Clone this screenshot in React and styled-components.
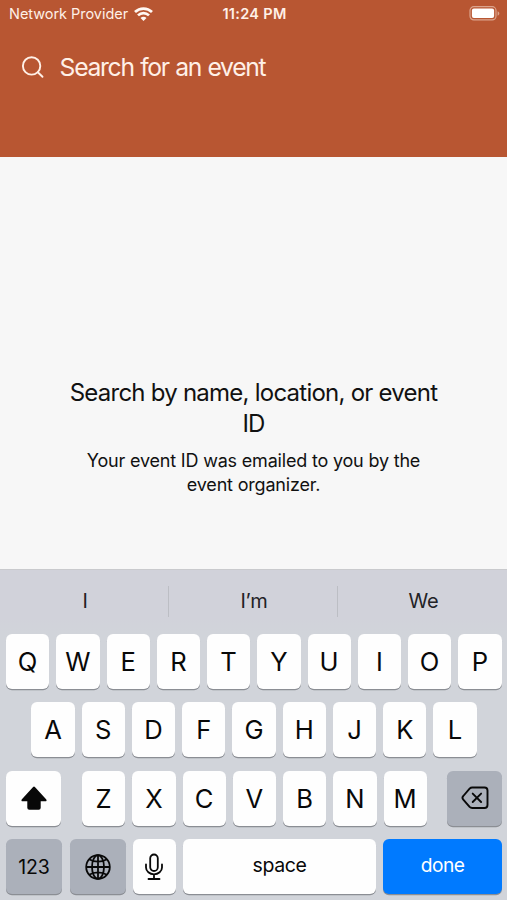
import React from 'react';
import styled, { createGlobalStyle } from 'styled-components';


const GlobalStyle = createGlobalStyle`
  * {
    box-sizing: border-box;
  }

  body {
    margin: 0;
    font-family: Inter, 'Liberation Sans', sans-serif;
    color: #111;
  }
`;

const Screen = styled.div`
  display: flex;
  flex-direction: column;
  width: 507px;
  height: 900px;
  overflow: hidden;
  background: #f7f7f7;
`;

const Header = styled.header`
  height: 157px;
  background: #b85632;
  color: #fff0e7;
`;

const StatusBar = styled.div`
  display: grid;
  grid-template-columns: 1fr auto 1fr;
  align-items: center;
  height: 27px;
  padding: 0 7px 0 9px;
`;

const Carrier = styled.div`
  display: flex;
  align-items: center;
  gap: 6px;
  font-size: 14.5px;
  letter-spacing: -0.04px;
  white-space: nowrap;
`;

const Clock = styled.div`
  font-size: 14.5px;
  font-weight: 600;
  letter-spacing: 0.3px;
`;

const Battery = styled.svg`
  justify-self: end;
`;

const SearchField = styled.div`
  display: flex;
  align-items: center;
  gap: 14.6px;
  height: 80px;
  padding: 0 0 0 21px;
  font-size: 24.7px;
  letter-spacing: -1.3px;
  word-spacing: 0.8px;
`;

const Message = styled.main`
  flex: 1;
  padding: 221px 60px 0;
  text-align: center;
`;

const Title = styled.h1`
  margin: 0;
  font-size: 24px;
  font-weight: 400;
  line-height: 30.5px;
  letter-spacing: -0.76px;
`;

const Hint = styled.p`
  margin: 9.5px 20px 0;
  font-size: 18px;
  line-height: 24.5px;
  letter-spacing: -0.19px;
`;

const Keyboard = styled.div`
  height: 331px;
  background: #d1d4da;
  border-top: 1px solid #c9cacd;
`;

const Suggestions = styled.div`
  display: grid;
  grid-template-columns: repeat(3, 1fr);
  align-items: center;
  height: 63.5px;
  background: linear-gradient(#d1d2da 75%, #d1d4da);
`;

const Suggestion = styled.div`
  height: 31px;
  padding-left: 2px;
  border-right: ${({ $last }) => ($last ? 'none' : '1px solid #bcbec4')};
  font-size: 20px;
  line-height: 31px;
  letter-spacing: -0.2px;
  text-align: center;
  color: #222226;
`;

const Keys = styled.div`
  display: flex;
  flex-direction: column;
  gap: 13.5px;
  padding: 0 5.5px 0 6px;
`;

const Row = styled.div`
  display: flex;
  gap: 7px;
  height: 55px;
  padding: 0 ${({ $inset }) => $inset || 0}px;
`;

const backgrounds = {
  light: '#fefefe',
  dark: '#abb0ba',
  primary: '#007aff',
};

const Key = styled.div`
  display: flex;
  flex: none;
  align-items: center;
  justify-content: center;
  width: ${({ $width }) => $width || 43.25}px;
  margin-left: ${({ $before }) => $before || 0}px;
  border-radius: 6px;
  background: ${({ $tone }) => backgrounds[$tone || 'light']};
  box-shadow: 0 1.3px 0 #8b8e94;
  color: ${({ $tone }) => ($tone === 'primary' ? '#fff' : '#080808')};
  font-size: ${({ $size }) => $size || 25.6}px;
  letter-spacing: ${({ $tracking }) => $tracking || 0}px;
  padding-bottom: ${({ $lift }) => $lift || 0}px;
`;

const SearchIcon = () => (
  <svg width="24" height="24" viewBox="0 0 24 24" fill="none" stroke="currentColor" strokeWidth="1.9" strokeLinecap="round">
    <circle cx="10.6" cy="10.9" r="8.7" />
    <path d="M16.8 17.2l4.7 4.6" />
  </svg>
);

const WifiIcon = () => (
  <svg width="19" height="14" viewBox="0 0 19 14" fill="none" stroke="#fff8f3" strokeWidth="2.7">
    <path d="M1 5a12.2 12.2 0 0 1 17 0" />
    <path d="M4 8.4a7.9 7.9 0 0 1 11 0" />
    <path d="M9.5 14L6.500 11a4.200 4.200 0 0 1 6 0z" fill="#fff8f3" stroke="none" />
  </svg>
);

const BatteryIcon = () => (
  <Battery width="31" height="15" viewBox="0 0 31 15" fill="none">
    <rect x="1" y="0.7" width="26" height="13.2" rx="3.8" stroke="#dba48d" strokeWidth="1.2" />
    <rect x="2.9" y="2.6" width="22.2" height="9.4" rx="2" fill="#fff" />
    <path d="M28.6 5.2c2.3.8 2.3 3.7 0 4.5z" fill="#dba48d" />
  </Battery>
);

const ShiftIcon = () => (
  <svg width="26" height="24" viewBox="0 0 26 24" fill="currentColor">
    <path d="M12.100 1q.9-.8 1.800 0l11.200 12.200c.9 1 .5 2.100-.8 2.100H19.700v6.400q0 2-2 2H8.300q-2 0-2-2v-6.400H1.700c-1.300 0-1.700-1.100-.8-2.100z" />
  </svg>
);

const GlobeIcon = () => (
  <svg width="26" height="26" viewBox="0 0 26 26" fill="none" stroke="currentColor" strokeWidth="1.8">
    <circle cx="13" cy="13" r="11.8" />
    <ellipse cx="13" cy="13" rx="6" ry="11.8" />
    <path d="M13 1v24M1 13h24M4 5.300q9 4.800 18 0M4 20.700q9-4.800 18 0" />
  </svg>
);

const MicIcon = () => (
  <svg width="20" height="28" viewBox="0 0 20 28" fill="none" stroke="currentColor" strokeWidth="1.8" strokeLinecap="round">
    <rect x="6.200" y="1.500" width="7.600" height="16.500" rx="3.800" />
    <path d="M2 11.500v3a8 6.800 0 0 0 16 0v-3M10 21.500v4.500M4.500 26h11" />
  </svg>
);

const BackspaceIcon = () => (
  <svg width="28" height="24" viewBox="0 0 28 24" fill="none" stroke="currentColor" strokeWidth="1.9" strokeLinecap="round" strokeLinejoin="round">
    <path d="M11.200 1.500h12.300q3 0 3 3v14.500q0 3-3 3H11.200q-1.500 0-2.600-1.100L2.300 13.600q-1.700-1.800 0-3.600L8.600 2.600q1.100-1.100 2.600-1.100z" />
    <path d="M11.700 7.600l8.400 8.400M20.100 7.600l-8.400 8.400" />
  </svg>
);

const letters = (row) => row.split('').map((letter) => <Key key={letter}>{letter}</Key>);

const App = () => (
  <>
    <GlobalStyle />
    <Screen>
      <Header>
        <StatusBar>
          <Carrier>Network Provider <WifiIcon /></Carrier>
          <Clock>11:24 PM</Clock>
          <BatteryIcon />
        </StatusBar>
        <SearchField><SearchIcon />Search for an event</SearchField>
      </Header>
      <Message>
        <Title>Search by name, location, or event ID</Title>
        <Hint>Your event ID was emailed to you by the event organizer.</Hint>
      </Message>
      <Keyboard>
        <Suggestions>
          <Suggestion>I</Suggestion>
          <Suggestion>I’m</Suggestion>
          <Suggestion $last>We</Suggestion>
        </Suggestions>
        <Keys>
          <Row>{letters('QWERTYUIOP')}</Row>
          <Row $inset={25.4}>{letters('ASDFGHJKL')}</Row>
          <Row>
            <Key $width={55}><ShiftIcon /></Key>
            <Key $before={14}>Z</Key>
            {letters('XCVBNM')}
            <Key $width={55} $before={13.3} $tone="dark"><BackspaceIcon /></Key>
          </Row>
          <Row>
            <Key $width={56} $tone="dark" $size={19.5} $tracking={-0.2}>123</Key>
            <Key $width={56} $before={1} $tone="dark"><GlobeIcon /></Key>
            <Key $width={42.8}><MicIcon /></Key>
            <Key $width={193.5} $size={19.5} $tracking={-0.4} $lift={3}>space</Key>
            <Key $width={118.5} $tone="primary" $size={19.2} $tracking={-0.6} $lift={3}>done</Key>
          </Row>
        </Keys>
      </Keyboard>
    </Screen>
  </>
);

export default App;
